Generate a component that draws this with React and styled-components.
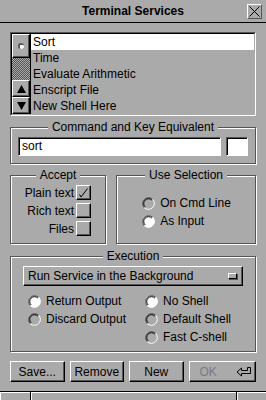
import styled, { createGlobalStyle } from "styled-components";

const GlobalStyle = createGlobalStyle`
body {
    margin: 0;
    background: #aaaaaa;
    font-family: "Liberation Sans", Helvetica, Arial, sans-serif;
    font-size: 12px;
    color: #000;
}
`

const services = ['Sort', 'Time', 'Evaluate Arithmetic', 'Enscript File', 'New Shell Here']

function Radio({ on }) {
    return (
        <svg width="15" height="15" viewBox="0 0 15 15">
            <circle cx="7.5" cy="7.5" r="6" fill={on ? '#fff' : '#aaa'} />
            <path d="M3.26 11.74 A6 6 0 0 1 11.74 3.26" fill="none" stroke="#555" strokeWidth="1" />
            <path d="M4.1 10.9 A4.8 4.8 0 0 1 10.9 4.1" fill="none" stroke="#000" strokeWidth="1" />
            <path d="M11.74 3.26 A6 6 0 0 1 3.26 11.74" fill="none" stroke="#fff" strokeWidth="1" />
        </svg>
    )
}

function RadioOption({ label, on }) {
    return (
        <RadioRow>
            <Radio on={on} />
            <span>{label}</span>
        </RadioRow>
    )
}

function CheckOption({ label, checked }) {
    return (
        <CheckRow>
            <span>{label}</span>
            <CheckBox>
                {checked && (
                    <svg width="13" height="13" viewBox="0 0 13 13">
                        <path d="M2.5 8.5 L4 11 L10.5 2.5" fill="none" stroke="#000" strokeWidth="1" />
                    </svg>
                )}
            </CheckBox>
        </CheckRow>
    )
}

export default function App() {
    return (
        <Window>
            <GlobalStyle />
            <TitleBar>
                <span />
                <Title>Terminal Services</Title>
                <CloseBox>
                    <svg width="13" height="13" viewBox="0 0 13 13">
                        <path d="M1.5 1.5 L11.5 11.5 M11.5 1.5 L1.5 11.5" stroke="#000" strokeWidth="1" />
                    </svg>
                </CloseBox>
            </TitleBar>

            <Content>
                <Browser>
                    <BrowserInner>
                        <Scroller>
                            <Knob><Dimple /></Knob>
                            <Trough />
                            <ArrowButton>
                                <svg width="9" height="8" viewBox="0 0 9 8"><path d="M4.5 0 L9 8 L0 8 Z" fill="#000" /></svg>
                            </ArrowButton>
                            <ArrowButton>
                                <svg width="9" height="8" viewBox="0 0 9 8"><path d="M0 0 L9 0 L4.5 8 Z" fill="#000" /></svg>
                            </ArrowButton>
                        </Scroller>
                        <List>
                            {services.map((s, i) => (
                                <ListRow key={s} selected={i === 0}>{s}</ListRow>
                            ))}
                        </List>
                    </BrowserInner>
                </Browser>

                <Group mt={11}>
                    <GroupTitle>Command and Key Equivalent</GroupTitle>
                    <FieldRow>
                        <TextField>sort</TextField>
                        <KeyField />
                    </FieldRow>
                </Group>

                <GroupRow>
                    <Group w={96}>
                        <GroupTitle>Accept</GroupTitle>
                        <CheckList>
                            <CheckOption label="Plain text" checked />
                            <CheckOption label="Rich text" />
                            <CheckOption label="Files" />
                        </CheckList>
                    </Group>
                    <Group grow>
                        <GroupTitle>Use Selection</GroupTitle>
                        <SelectionBody>
                            <RadioColumn>
                                <RadioOption label="On Cmd Line" />
                                <RadioOption label="As Input" on />
                            </RadioColumn>
                        </SelectionBody>
                    </Group>
                </GroupRow>

                <Group mt={12}>
                    <GroupTitle>Execution</GroupTitle>
                    <ExecBody>
                        <PopUp>
                            <span>Run Service in the Background</span>
                            <PopUpMark />
                        </PopUp>
                        <RadioGrid>
                            <RadioColumn>
                                <RadioOption label="Return Output" on />
                                <RadioOption label="Discard Output" />
                            </RadioColumn>
                            <RadioColumn>
                                <RadioOption label="No Shell" on />
                                <RadioOption label="Default Shell" />
                                <RadioOption label="Fast C-shell" />
                            </RadioColumn>
                        </RadioGrid>
                    </ExecBody>
                </Group>

                <ButtonRow>
                    <Button>Save...</Button>
                    <Button>Remove</Button>
                    <Button>New</Button>
                    <Button disabled ok>
                        <span>OK</span>
                        <svg width="16" height="10" viewBox="0 0 16 10">
                            <path d="M14.5 0.5 L14.5 6.5 L5.5 6.5 L5.5 9 L1 5 L5.5 1 L5.5 3.5 L11.5 3.5 L11.5 0.5 Z" fill="none" stroke="#000" strokeWidth="1" />
                        </svg>
                    </Button>
                </ButtonRow>
            </Content>

            <ResizeBar>
                <ResizeSeg w={30} />
                <ResizeSeg grow />
                <ResizeSeg w={29} last />
            </ResizeBar>
        </Window>
    );
}

const Window = styled.div`
width: 266px;
height: 400px;
display: flex;
flex-direction: column;
background: #aaaaaa;
overflow: hidden;
`
const TitleBar = styled.div`
height: 22px;
border-bottom: 1px solid #000;
display: grid;
grid-template-columns: 1fr auto 1fr;
align-items: center;
`
const Title = styled.div`
font-weight: bold;
font-size: 12px;
line-height: 14px;
`
const CloseBox = styled.div`
justify-self: end;
margin-right: 4px;
box-sizing: border-box;
width: 15px;
height: 15px;
border: 1px solid;
border-color: #fff #555 #555 #fff;
display: flex;
align-items: center;
justify-content: center;
`
const Content = styled.div`
flex: 1;
padding: 9px 10px 0 10px;
display: flex;
flex-direction: column;
`
const Browser = styled.div`
border: 1px solid;
border-color: #555 #fff #fff #555;
`
const BrowserInner = styled.div`
border: 1px solid;
border-color: #000 #aaa #aaa #000;
height: 80px;
display: flex;
`
const Scroller = styled.div`
width: 18px;
border-right: 1px solid #000;
display: flex;
flex-direction: column;
`
const Knob = styled.div`
box-sizing: border-box;
height: 24px;
border: 1px solid;
border-color: #fff #000 #000 #fff;
box-shadow: inset -1px -1px 0 #555;
display: flex;
align-items: center;
justify-content: center;
`
const Dimple = styled.div`
box-sizing: border-box;
width: 6px;
height: 6px;
border-radius: 50%;
background: radial-gradient(circle at 65% 65%, #fff 0 35%, #555 45%);
`
const Trough = styled.div`
flex: 1;
background: repeating-conic-gradient(#555 0 25%, #aaa 0 50%) 0 0 / 2px 2px;
`
const ArrowButton = styled.div`
box-sizing: border-box;
height: 17px;
border: 1px solid;
border-color: #fff #000 #000 #fff;
box-shadow: inset -1px -1px 0 #555;
display: flex;
align-items: center;
justify-content: center;
`
const List = styled.div`
flex: 1;
display: flex;
flex-direction: column;
`
const ListRow = styled.div`
height: 16px;
line-height: 16px;
padding-left: 2px;
background: ${p => p.selected ? '#fff' : 'transparent'};
white-space: nowrap;
`
const Group = styled.div`
margin-top: ${p => p.mt || 0}px;
width: ${p => p.w ? p.w + 'px' : 'auto'};
flex: ${p => p.grow ? 1 : 'none'};
box-sizing: border-box;
border: 1px solid #555;
box-shadow: inset 1px 1px 0 #fff, 1px 1px 0 #fff;
display: flex;
flex-direction: column;
`
const GroupTitle = styled.div`
align-self: center;
margin-top: -8px;
padding: 0 4px;
background: #aaaaaa;
line-height: 14px;
white-space: nowrap;
`
const FieldRow = styled.div`
display: flex;
gap: 5px;
margin-top: 3px;
padding: 0 7px 7px 7px;
`
const TextField = styled.div`
flex: 1;
box-sizing: border-box;
height: 19px;
padding-left: 3px;
line-height: 16px;
background: #fff;
border: 1px solid;
border-color: #555 #fff #fff #555;
box-shadow: inset 1px 1px 0 #000;
`
const KeyField = styled(TextField)`
flex: none;
width: 22px;
`
const GroupRow = styled.div`
display: flex;
gap: 10px;
margin-top: 11px;
`
const CheckList = styled.div`
display: flex;
flex-direction: column;
gap: 3px;
margin-top: 3px;
padding: 0 14px 7px 0;
`
const CheckRow = styled.div`
display: flex;
justify-content: flex-end;
align-items: center;
gap: 2px;
height: 15px;
`
const CheckBox = styled.div`
box-sizing: border-box;
width: 15px;
height: 15px;
border: 1px solid;
border-color: #fff #000 #000 #fff;
box-shadow: inset -1px -1px 0 #555;
display: flex;
align-items: center;
justify-content: center;
`
const SelectionBody = styled.div`
flex: 1;
display: flex;
align-items: center;
justify-content: center;
padding-bottom: 1px;
`
const RadioColumn = styled.div`
display: flex;
flex-direction: column;
`
const RadioRow = styled.div`
display: flex;
align-items: center;
gap: 4px;
height: 18px;
white-space: nowrap;
`
const ExecBody = styled.div`
display: flex;
flex-direction: column;
padding: 3px 12px 5px 12px;
`
const PopUp = styled.div`
box-sizing: border-box;
height: 20px;
padding: 0 4px;
border: 1px solid;
border-color: #fff #000 #000 #fff;
box-shadow: inset -1px -1px 0 #555;
display: flex;
align-items: center;
justify-content: space-between;
`
const PopUpMark = styled.div`
box-sizing: border-box;
width: 9px;
height: 6px;
border: 1px solid;
border-color: #fff #000 #000 #fff;
box-shadow: 1px 1px 0 #555;
margin-right: 1px;
`
const RadioGrid = styled.div`
display: grid;
grid-template-columns: 117px 1fr;
margin-top: 6px;
padding-left: 4px;
`
const ButtonRow = styled.div`
display: flex;
gap: 5px;
margin-top: 9px;
`
const Button = styled.div`
flex: 1;
box-sizing: border-box;
height: 21px;
border: 1px solid;
border-color: #fff #000 #000 #fff;
box-shadow: inset -1px -1px 0 #555;
display: flex;
align-items: center;
justify-content: ${p => p.ok ? 'space-between' : 'center'};
padding: ${p => p.ok ? '0 3px 0 10px' : '0'};
color: ${p => p.disabled ? '#7a7a7a' : '#000'};
white-space: nowrap;
svg path { stroke: ${p => p.disabled ? '#000' : '#000'}; }
`
const ResizeBar = styled.div`
height: 8px;
border-top: 1px solid #000;
display: flex;
`
const ResizeSeg = styled.div`
width: ${p => p.w ? p.w + 'px' : 'auto'};
flex: ${p => p.grow ? 1 : 'none'};
border-right: ${p => p.last ? 'none' : '1px solid #000'};
box-shadow: inset 1px 1px 0 #fff;
`
